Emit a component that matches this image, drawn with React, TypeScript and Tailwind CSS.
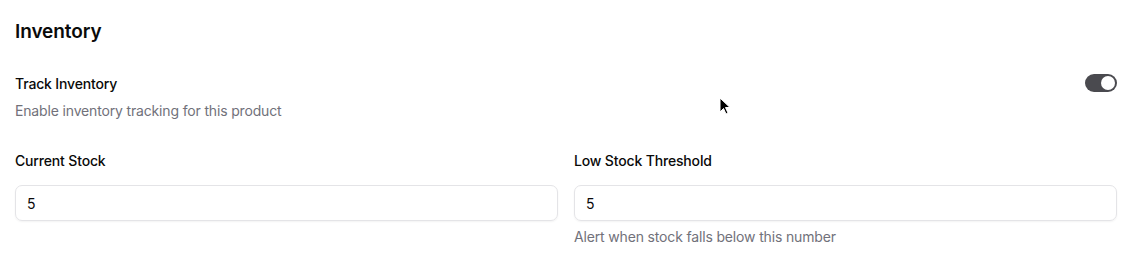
import React from "react";

export default function App() {
  return (
    <div
      className="relative w-[1140px] h-[267px] bg-white text-[#0a0a0a] tracking-[-0.01em]"
      style={{ fontFamily: "Inter, 'Noto Sans', sans-serif" }}
    >
      <div className="pl-[15px] pt-[18px] w-[1117px]">
        <h2 className="text-[19px] leading-[28px] font-semibold tracking-[-0.005em]">Inventory</h2>
        <div className="mt-[28px] flex items-start justify-between">
          <div>
            <div className="text-[14px] leading-[20px] font-medium">Track Inventory</div>
            <div className="mt-[7px] text-[14px] leading-[20px] text-[#71717a]">
              Enable inventory tracking for this product
            </div>
          </div>
          <div className="w-[32px] h-[18px] rounded-full bg-[#4a4a4f] flex items-center justify-end pr-[2px]">
            <div className="w-[14px] h-[14px] rounded-full bg-white" />
          </div>
        </div>
        <div className="mt-[30px] grid grid-cols-2 gap-4">
          <div>
            <div className="text-[14px] leading-[20px] font-medium">Current Stock</div>
            <div className="mt-[14px] h-[36px] rounded-[7px] border border-[#e4e4e7] shadow-[0_1px_2px_rgba(0,0,0,0.05)] flex items-center px-[11px] text-[14px]">
              5
            </div>
          </div>
          <div>
            <div className="text-[14px] leading-[20px] font-medium">Low Stock Threshold</div>
            <div className="mt-[14px] h-[36px] rounded-[7px] border border-[#e4e4e7] shadow-[0_1px_2px_rgba(0,0,0,0.05)] flex items-center px-[11px] text-[14px]">
              5
            </div>
            <div className="mt-[6px] text-[14px] leading-[20px] text-[#71717a]">
              Alert when stock falls below this number
            </div>
          </div>
        </div>
      </div>
      <svg
        className="absolute left-[719px] top-[97px]"
        width="12"
        height="19"
        viewBox="0 0 12 19"
      >
        <path d="M1 1 L1 15 L4.5 11.5 L7 17 L9 16 L6.5 10.5 L11 10.5 Z" fill="#000" stroke="#fff" strokeWidth="1" strokeLinejoin="round" />
      </svg>
    </div>
  );
}
